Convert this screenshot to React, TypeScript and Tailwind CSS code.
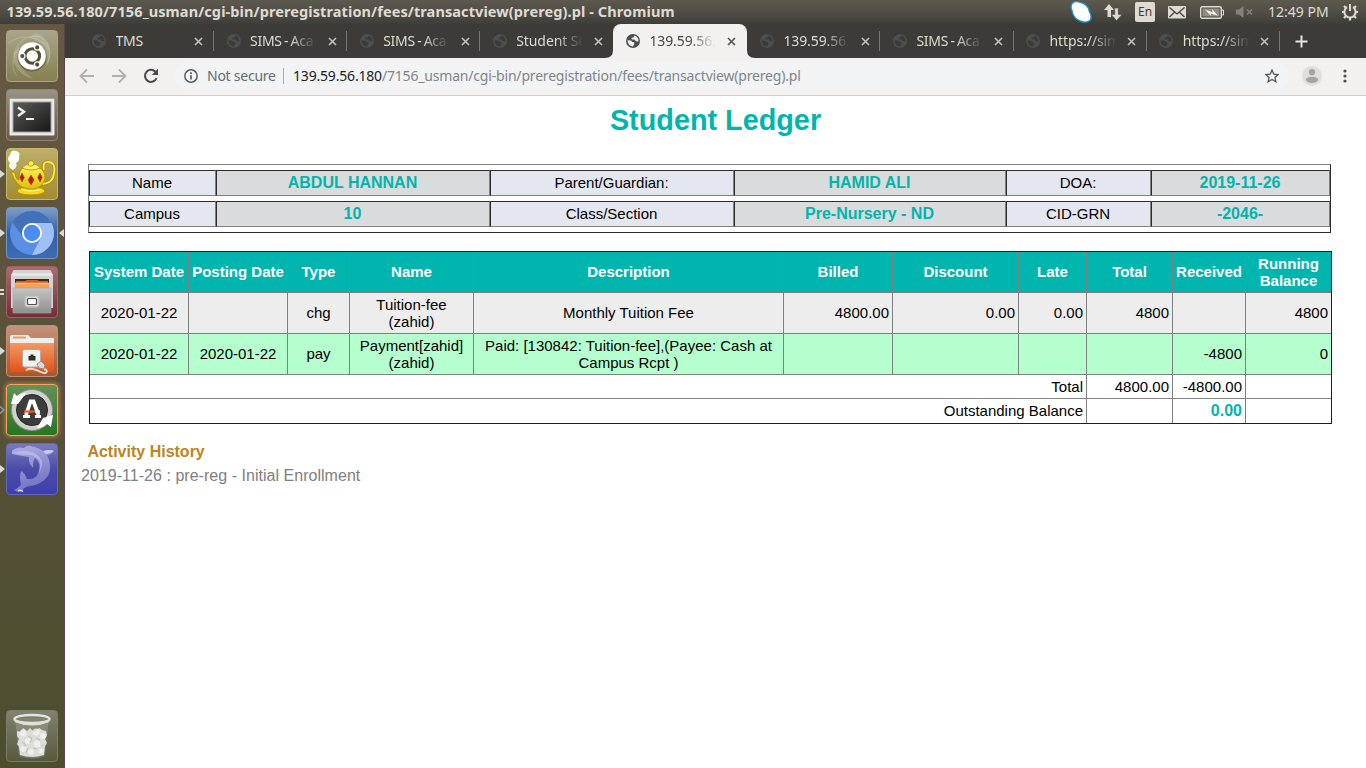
import React from "react";

const UI = "font-['Noto_Sans','Open_Sans',sans-serif]";

/* ---------- top panel ---------- */

function TopPanel() {
  return (
    <header className={`flex h-6 shrink-0 items-center bg-linear-to-b from-[#5c594e] via-[#504e46] to-[#3e3d38] text-[#dfdbd2] ${UI}`}>
      <div className="w-[1063px] whitespace-nowrap pb-0.5 pl-[6.5px] text-[14.5px] leading-[22px] font-bold tracking-[0.1px]">
        139.59.56.180/7156_usman/cgi-bin/preregistration/fees/transactview(prereg).pl - Chromium
      </div>
      <div className="flex flex-1 items-center">
        <svg className="ml-[6px] shrink-0" width="24" height="24" viewBox="0 0 24 24">
          <path d="M3.5 3Q6 .5 12 2.5Q19.5 4.5 20.5 12Q23.5 17 21 20.5Q17 23.5 11 21Q4 18 3 10.5Q.8 6 3.5 3Z" fill="#fff" stroke="#1c8fcb" strokeWidth="1.4" />
        </svg>
        <svg className="ml-[11px] shrink-0" width="18" height="18" viewBox="0 0 18 18" fill="#dfdbd2">
          <path d="M5 1L10 7H7V14H3.5V7H0Z" />
          <path d="M12.5 17.5L7.3 11.5H10.8V5H14.2V11.5H18Z" stroke="#4c4a43" strokeWidth=".5" />
        </svg>
        <div className="ml-[13px] flex h-5 w-5 shrink-0 items-center justify-center rounded-[2px] bg-[#dfdbd2] text-[12px] leading-5 text-[#3c3b37]">En</div>
        <svg className="ml-[13px] shrink-0" width="18" height="13" viewBox="0 0 18 13">
          <rect width="18" height="12.5" rx="1" fill="#dfdbd2" />
          <path d="M1.5 1.5L9 8L16.5 1.5M1.5 11L6.5 6.2M16.5 11L11.5 6.2" fill="none" stroke="#45433d" strokeWidth="1.3" />
        </svg>
        <svg className="ml-[14px] shrink-0" width="24" height="13" viewBox="0 0 24 13">
          <rect x=".7" y=".7" width="20.6" height="11.6" rx="1.5" fill="none" stroke="#dfdbd2" strokeWidth="1.4" />
          <rect x="2.5" y="2.5" width="17" height="8" fill="#8f8c83" />
          <path d="M22 4H23.5V9H22" fill="none" stroke="#dfdbd2" />
          <path d="M5 3.5L12.5 6.2L12 3L18 9.8L10.8 7.4L11 10Z" fill="#f4f1e8" />
        </svg>
        <svg className="ml-3 shrink-0" width="18" height="12" viewBox="0 0 18 12">
          <path d="M0 3.5H3L7.5 0V12L3 8.5H0Z" fill="#858279" />
          <path d="M11 3.5L16 8.5M16 3.5L11 8.5" stroke="#858279" strokeWidth="1.5" />
        </svg>
        <span className="ml-[14px] w-[61px] shrink-0 whitespace-nowrap text-[14px] leading-6 tracking-[0.02px]">12:49 PM</span>
        <svg className="ml-3 shrink-0" width="18" height="18" viewBox="0 0 18 18" fill="none" stroke="#dfdbd2">
          <path d="M6 4.2A5.6 5.6 0 1 0 12 4.2" strokeWidth="2" />
          <path d="M9 1V8" strokeWidth="2" />
          <path d="M1 9H3M15 9H17M9 15V17.5M3 3L4.8 4.8M15 3L13.2 4.8M3 15L4.8 13.2M15 15L13.2 13.2" strokeWidth="2.2" />
        </svg>
      </div>
    </header>
  );
}

/* ---------- launcher ---------- */

function DashIcon() {
  return (
    <g>
      <path d="M8 34C6 18 15 7 29 6C43 7 47 22 41 34M2 13C15 4 34 5 44 20M11 46C3 36 7 20 20 13" fill="none" stroke="#fff" strokeOpacity=".16" strokeWidth="1.2" />
      <path d="M30 3C44 8 48 24 41 36C44 22 38 10 22 8Z" fill="#fff" opacity=".16" />
      <path d="M8 22C6 36 14 46 28 49C18 42 10 36 13 16Z" fill="#fff" opacity=".16" />
      <circle cx="26" cy="27" r="14.6" fill="#4d4a30" opacity=".5" />
      <circle cx="26" cy="26" r="13.8" fill="#fff" />
      <circle cx="26.3" cy="26" r="7.3" fill="none" stroke="#524f35" strokeWidth="3" />
      <g fill="#524f35" stroke="#fff" strokeWidth="1.2">
        <circle cx="16.3" cy="26" r="2.7" /><circle cx="31.2" cy="17.4" r="2.7" /><circle cx="31.2" cy="34.6" r="2.7" />
      </g>
    </g>
  );
}
function TerminalIcon() {
  return (
    <g>
      <rect x="3.5" y="9.5" width="45" height="37" rx="1" fill="#e9e9e7" stroke="#a5a29c" />
      <rect x="6.5" y="12.5" width="39" height="31" fill="#9c9c9a" />
      <rect x="7.5" y="13.5" width="37" height="29" fill="url(#screen)" />
      <path d="M12 18.5L18 22.8L12 27" fill="none" stroke="#f2f2f2" strokeWidth="2.4" />
      <path d="M20 30H28" stroke="#f2f2f2" strokeWidth="2" />
    </g>
  );
}
function TeapotIcon() {
  return (
    <g>
      <path d="M7 22Q1 19 4 15Q0 10 4 7Q5 1 10 3Q15 4 13 9Q14 13 10 15Q12 19 7 22Z" fill="#fff" opacity=".95" />
      <path d="M38 22Q36 13 43 14Q50 15 48 25Q47 36 35 36" fill="none" stroke="#b08a00" strokeWidth="3.2" />
      <path d="M38 22Q36 13 43 14Q50 15 48 25Q47 36 35 36" fill="none" stroke="#ffec50" strokeWidth="1.8" />
      <ellipse cx="25" cy="43" rx="14" ry="4" fill="#f6d91c" stroke="#b58e00" />
      <path d="M5 23L9 25Q10 32 13 32Q12 21 19 19H32Q40 23 39 31Q37 39 28 41H22Q9 39 5 23Z" fill="url(#gold)" stroke="#b58e00" />
      <path d="M16 20Q19 16 25 16Q32 16 34 20Q25 24 16 20Z" fill="#fff06a" stroke="#b58e00" strokeWidth=".8" />
      <circle cx="25" cy="15.5" r="2.8" fill="#ffec50" stroke="#b58e00" strokeWidth=".8" />
      <g fill="#c9101b" stroke="#7c5200" strokeWidth=".5">
        <path d="M16 25L18.3 29.5L16 34L13.8 29.5Z" /><path d="M25 27L28 32L25 37L22 32Z" /><path d="M34 25L36.2 29.5L34 34L31.7 29.5Z" />
      </g>
      <path d="M15 41Q25 45 36 41" fill="none" stroke="#fff7a0" strokeWidth="1" />
    </g>
  );
}
function ChromiumIcon() {
  return (
    <g>
      <circle cx="26" cy="26" r="22" fill="#5a8fe6" />
      <path d="M6.5 15.5A22 22 0 0 1 45.5 16H26A10 10 0 0 0 16.5 29.5Z" fill="#4470b8" />
      <path d="M45.5 16A22 22 0 0 1 26 48L34.8 31Q38.5 22 26 16Z" fill="#9fc0f5" />
      <circle cx="26" cy="26" r="10" fill="#fff" />
      <circle cx="26" cy="26" r="8.2" fill="#4c8bf0" />
    </g>
  );
}
function FilesIcon() {
  return (
    <g>
      <path d="M7 5Q7 4 8 4H44Q45 4 45 5L47 9V42H5V9Z" fill="#d3d3d1" />
      <path d="M6 8.5H46" stroke="#efefee" strokeWidth="2" />
      <path d="M9 13V21H43V13Z" fill="#3c2a21" />
      <path d="M10 15H19L21 14H31L33 15H42V22H10Z" fill="#dc5d1b" />
      <path d="M9 18H43V22H9Z" fill="#f4a057" />
      <path d="M9 17.3H43" stroke="#ffe0b0" />
      <path d="M7 22H45V47H7Z" fill="url(#steel)" stroke="#a6a6a4" strokeWidth=".6" />
      <rect x="19" y="30" width="14" height="11" rx="2" fill="#d8d8d6" stroke="#b9b9b7" />
      <rect x="21.5" y="32.5" width="9" height="6" rx="1" fill="#f7f7f7" stroke="#50504e" strokeWidth="1.2" />
    </g>
  );
}
function NetworkIcon() {
  return (
    <g>
      <path d="M4 12Q4 10 6 10H22L25 13H48V20H4Z" fill="#f1eeea" />
      <path d="M7 12.5H20" stroke="#e9976e" strokeWidth="2" />
      <path d="M4 18H48V44Q48 47 45 47H6Q4 47 4 44Z" fill="url(#orange)" />
      <rect x="16.5" y="24.5" width="18" height="17.5" rx="2" fill="#f2f1ef" stroke="#b5aaa2" />
      <path d="M22.5 35.5V31H24.5V29.5H27.5V31H29.5V35.5Z" fill="#2f302a" />
      <path d="M20 45C26 42 30 45 35 47C41 50 43 45 38 44" fill="none" stroke="#e5e1dc" strokeWidth="1.8" />
      <path d="M31 39L35 36L39 40L38 44L33 43Z" fill="#ddd9d4" stroke="#88817a" strokeWidth=".8" />
    </g>
  );
}
function UpdaterIcon() {
  return (
    <g>
      <circle cx="26" cy="26" r="20.5" fill="#d0d1cf" stroke="#8b8e89" />
      <circle cx="26" cy="26" r="15.5" fill="#3d3d3d" stroke="#222" />
      <path d="M5 20L8 9L11 12Q14 9 20 9L12 20Z" fill="#fff" />
      <path d="M47 31L45 43L41 40Q37 44 31 44L37 34Z" fill="#fff" />
      <path d="M20 31L24.5 17.5H27.5L32.5 31" fill="none" stroke="#fff" strokeWidth="3.8" />
      <path d="M17 32.5H24M29 32.5H35" stroke="#fff" strokeWidth="2.8" />
      <path d="M18 27.5H29" stroke="#f35a1a" strokeWidth="2.2" /><path d="M29 27.5H34" stroke="#fff" strokeWidth="2.2" />
    </g>
  );
}
function DolphinIcon() {
  return (
    <g>
      <path d="M6 8Q11 3 18 5Q21 2 25 3Q33 5 37 8Q44 6 48 8Q45 12 41 12Q47 24 42 33Q35 42 24 43Q17 44 16 49Q12 50 8 47Q14 44 15 41Q13 34 15 28Q19 30 21 36Q30 37 33 29Q35 19 29 15Q27 17 27 25Q22 20 23 14Q15 13 6 11Z" fill="url(#dolphin)" />
      <path d="M7 10Q16 12 24 12Q31 13 34 19Q35 26 31 33Q37 25 36 18Q31 8 20 8Q12 8 7 10Z" fill="#c9cbf0" opacity=".55" />
      <path d="M37 8Q44 6 48 8Q44 11 40 11Z" fill="#c9cbee" />
      <path d="M12 48Q14 46 17 48.5" stroke="#e6e7fa" strokeWidth="1.4" fill="none" />
    </g>
  );
}
function TrashIcon() {
  return (
    <g>
      <path d="M9 8L13 46Q26 51 39 46L43 8Z" fill="#d4d8c8" opacity=".22" />
      <path d="M11 21L15 22L17 18L21 21L24 18L28 22L33 18L36 20L40 21L41 25L39 29L41 33L39 36L38 45Q26 49 14 45L13 37L11 34L13 29L11 26Z" fill="#dcdcda" />
      <g fill="#f4f4f2" opacity=".75">
        <circle cx="17" cy="23" r="3.5" /><circle cx="30" cy="22" r="3.5" /><circle cx="37" cy="26" r="3" /><circle cx="22" cy="31" r="3" /><circle cx="17" cy="39" r="3" /><circle cx="31" cy="34" r="3.5" /><circle cx="35" cy="41" r="2.5" /><circle cx="25" cy="42" r="3" />
      </g>
      <path d="M22 26L26 28L24 33M30 28L34 30M16 32L20 35L18 36M27 38L31 39M22 38L20 43M35 36L37 35" fill="none" stroke="#bcbdb9" strokeWidth="1" />
      <ellipse cx="26" cy="9" rx="17.5" ry="4" fill="#757767" fillOpacity=".5" stroke="#e3e3e0" strokeWidth="2.4" />
      <path d="M9 11Q26 18 43 11" fill="none" stroke="#dededb" strokeWidth="2.2" />
    </g>
  );
}

function Defs() {
  const stops = (a: string, b: string) => (<><stop offset="0" stopColor={a} /><stop offset="1" stopColor={b} /></>);
  return (
    <defs>
      <linearGradient id="screen" x1="0" y1="0" x2="1" y2="1">{stops("#5b5b5a", "#171717")}</linearGradient>
      <linearGradient id="gold" x1="0" y1="0" x2="0" y2="1">{stops("#fff048", "#e2bb10")}</linearGradient>
      <linearGradient id="steel" x1="0" y1="0" x2="0" y2="1">{stops("#c4c4c2", "#8f8f8d")}</linearGradient>
      <linearGradient id="orange" x1="0" y1="0" x2="0" y2="1">{stops("#f39765", "#e25416")}</linearGradient>
      <linearGradient id="dolphin" x1="0" y1="0" x2=".3" y2="1">{stops("#aeb0e0", "#7273c2")}</linearGradient>
    </defs>
  );
}

type Tile = { icon: () => React.JSX.Element; tile: string; mark?: "one" | "two" | "hollow"; focus?: boolean };

const TILES: Tile[] = [
  { icon: DashIcon, tile: "bg-linear-to-b from-[#a9a58a] to-[#858052] border-[#aaa58a]" },
  { icon: TerminalIcon, tile: "bg-linear-to-b from-[#9a9284] to-[#66594a] border-[#8f8575]" },
  { icon: TeapotIcon, tile: "bg-linear-to-b from-[#bdae6a] to-[#a28c2c] border-[#c9b768]", mark: "one" },
  { icon: ChromiumIcon, tile: "bg-linear-to-b from-[#7f9cc9] via-[#315fa9] to-[#3e6cb2] border-[#7595c4]", mark: "one", focus: true },
  { icon: FilesIcon, tile: "bg-linear-to-b from-[#a86b70] to-[#782c3b] border-[#a16169]", mark: "two" },
  { icon: NetworkIcon, tile: "bg-linear-to-b from-[#c3937c] to-[#a9552d] border-[#cb8e6c]", mark: "one" },
  { icon: UpdaterIcon, tile: "bg-linear-to-b from-[#629158] to-[#267521] border-[#f1a45e] shadow-[0_0_4px_1px_#c9783a]", mark: "hollow" },
  { icon: DolphinIcon, tile: "bg-linear-to-b from-[#797ac0] via-[#4b4baa] to-[#3e3fae] border-[#6667b5]", mark: "one" },
];

function TileBox({ item }: { item: Tile }) {
  const Icon = item.icon;
  return (
    <div className="flex h-[52px] items-center">
      <svg width="6" height="12" viewBox="0 0 6 12" className="shrink-0">
        {item.mark === "one" && <path d="M0 2L5 6L0 10Z" fill="#dcdad5" />}
        {item.mark === "two" && <path d="M0 4H4M0 8H4" stroke="#dcdad5" strokeWidth="2.2" />}
        {item.mark === "hollow" && <path d="M0 2.5L4 6L0 9.5" fill="none" stroke="#69b6e0" strokeWidth="1.2" />}
      </svg>
      <div className={`h-[52px] w-[52px] shrink-0 rounded-[4px] border ${item.tile}`}>
        <svg className="-m-px block" width="52" height="52" viewBox="0 0 52 52"><Icon /></svg>
      </div>
      {item.focus && (
        <svg width="7" height="12" viewBox="0 0 7 12" className="shrink-0"><path d="M6 2L1 6L6 10Z" fill="#dcdad5" /></svg>
      )}
    </div>
  );
}

function Launcher() {
  return (
    <nav className="flex w-[65px] shrink-0 flex-col justify-between border-r border-[#5c4549] bg-linear-to-b from-[#665943] via-[#57513a] to-[#4c4e2e] pt-[6px] pb-[6px]">
      <svg width="0" height="0" className="absolute"><Defs /></svg>
      <div className="flex flex-col gap-[7px]">
        {TILES.map((t, i) => <TileBox key={i} item={t} />)}
      </div>
      <TileBox item={{ icon: TrashIcon, tile: "bg-linear-to-b from-[#81826f] to-[#58593e] border-[#7b7c66]" }} />
    </nav>
  );
}

/* ---------- browser chrome ---------- */

function Globe({ active }: { active: boolean }) {
  return (
    <svg width="14" height="14" viewBox="0 0 14 14" className="shrink-0">
      <circle cx="7" cy="7" r="7" fill={active ? "#4b4c4e" : "#4d4e50"} />
      <path d="M1.4 6.2L5 6.5L6.3 8L8.4 8.2L8.2 10.2L6.8 12.4Q2.2 12 1.4 6.2ZM8.6 1.6L7.7 3.2L5.3 4L6 5.4L8.4 5.6L10 7.2L12.5 7.4Q12.7 3.2 8.6 1.6Z" fill={active ? "#f2f1f0" : "#3c3b37"} />
    </svg>
  );
}

const TABS = ["TMS", "SIMS - Aca", "SIMS - Aca", "Student Se", "139.59.56.", "139.59.56.", "SIMS - Aca", "https://sim", "https://sim"];

function TabStrip() {
  return (
    <div className={`flex h-[34px] shrink-0 bg-[#3c3b37] pl-4 ${UI}`}>
      {TABS.map((t, i) => {
        const active = i === 4;
        const divider = i !== 3 && !active;
        return (
          <div key={i} className={`relative flex shrink-0 items-center ${active ? "w-[134px] rounded-t-[8px] bg-[#f2f1f0] text-[#45474a]" : "w-[133.1px] text-[#dfdbd2]"}`}>
            <div className={i === 0 ? "ml-[11px] flex" : "ml-[12.5px] flex"}><Globe active={active} /></div>
            <div className={`ml-[9.5px] overflow-hidden whitespace-nowrap text-[14px] leading-5 ${i === 0 ? "w-[67px] tracking-[-0.2px]" : "w-[67px] mask-r-from-60% mask-r-to-100%"} ${t.startsWith("SIMS") ? "tracking-[-0.3px] [word-spacing:-1px]" : "tracking-[-0.1px]"}`}>{t}</div>
            <svg className={i === 0 ? "ml-[11px]" : "ml-[10.5px]"} width="9" height="9" viewBox="0 0 9 9">
              <path d="M1 1L8 8M8 1L1 8" stroke={active ? "#505255" : "#c3c0b8"} strokeWidth="1.6" />
            </svg>
            {divider && <div className="absolute top-[7px] right-0 h-5 w-px bg-[#77766f]" />}
            {active && (
              <>
                <svg className="absolute bottom-0 -left-2" width="8" height="8" viewBox="0 0 8 8"><path d="M8 0V8H0Q8 8 8 0Z" fill="#f2f1f0" /></svg>
                <svg className="absolute -right-2 bottom-0" width="8" height="8" viewBox="0 0 8 8"><path d="M0 0V8H8Q0 8 0 0Z" fill="#f2f1f0" /></svg>
              </>
            )}
          </div>
        );
      })}
      <svg className="mt-[11px] ml-[15px]" width="13" height="13" viewBox="0 0 13 13"><path d="M6.5 .5V12.5M.5 6.5H12.5" stroke="#e8e4db" strokeWidth="2" /></svg>
    </div>
  );
}

function Toolbar() {
  return (
    <div className={`flex h-[38px] shrink-0 items-center border-b border-[#cfcecd] bg-[#f2f1f0] pb-px ${UI}`}>
      <svg className="ml-[14px]" width="16" height="16" viewBox="0 0 16 16" fill="none" stroke="#b0b0b0" strokeWidth="1.8"><path d="M15 8H2M8 1.5L1.5 8L8 14.5" /></svg>
      <svg className="ml-4" width="16" height="16" viewBox="0 0 16 16" fill="none" stroke="#b0b0b0" strokeWidth="1.8"><path d="M1 8H14M8 1.5L14.5 8L8 14.5" /></svg>
      <svg className="ml-4" width="16" height="16" viewBox="0 0 16 16"><path d="M13.6 10A6 6 0 1 1 12.4 3.8" fill="none" stroke="#46484b" strokeWidth="2" /><path d="M15 .8V7H8.8Z" fill="#46484b" /></svg>
      <div className="ml-[15px] flex h-7 w-[1116px] shrink-0 items-center rounded-full bg-[#f1f3f5] pl-[10px] text-[14px] leading-5">
        <svg width="14" height="14" viewBox="0 0 14 14"><circle cx="7" cy="7" r="6.2" fill="none" stroke="#5a5c60" strokeWidth="1.5" /><path d="M7 6.2V10.5M7 3.2V4.9" stroke="#5a5c60" strokeWidth="1.7" /></svg>
        <span className="ml-[9px] w-[69px] shrink-0 whitespace-nowrap text-[#696c70] tracking-[-0.25px]">Not secure</span>
        <div className="ml-[7px] h-4 w-px bg-[#a9abad]" />
        <span className="ml-[9px] whitespace-nowrap text-[#80858a] tracking-[-0.185px]"><span className="text-[#202124]">139.59.56.180</span>/7156_usman/cgi-bin/preregistration/fees/transactview(prereg).pl</span>
        <svg className="mr-[11px] ml-auto" width="14" height="14" viewBox="0 0 14 14"><path d="M7 1L8.8 5.1L13.2 5.5L9.9 8.4L10.9 12.8L7 10.5L3.1 12.8L4.1 8.4L.8 5.5L5.2 5.1Z" fill="none" stroke="#55585c" strokeWidth="1.3" /></svg>
      </div>
      <svg className="ml-3 shrink-0" width="20" height="20" viewBox="0 0 20 20"><circle cx="10" cy="10" r="10" fill="#dedede" /><circle cx="10" cy="6.2" r="3.1" fill="#a4a4a4" /><ellipse cx="10" cy="13.8" rx="6" ry="3.1" fill="#a4a4a4" /></svg>
      <svg className="ml-[21px] shrink-0" width="4" height="14" viewBox="0 0 4 14" fill="#4b4d50"><circle cx="2" cy="2" r="1.6" /><circle cx="2" cy="7" r="1.6" /><circle cx="2" cy="12" r="1.6" /></svg>
    </div>
  );
}

/* ---------- page ---------- */

const INFO: [string, string][][] = [
  [["Name", "ABDUL HANNAN"], ["Parent/Guardian:", "HAMID ALI"], ["DOA:", "2019-11-26"]],
  [["Campus", "10"], ["Class/Section", "Pre-Nursery - ND"], ["CID-GRN", "-2046-"]],
];

function InfoTable() {
  const edge = "flex items-center justify-center border border-t-[#2c2c2c] border-l-[#2c2c2c] border-r-[#808080] border-b-[#808080] pr-px";
  return (
    <div className="ml-[23px] flex h-[69px] w-[1243px] flex-col gap-[5px] border border-t-[#808080] border-r-[#2c2c2c] border-b-[#2c2c2c] border-l-[#808080] pt-[5px]">
      {INFO.map((row, i) => (
        <div key={i} className="grid h-[26px] grid-cols-[127px_274px_244px_272px_145px_179px]">
          {row.map(([k, v]) => (
            <React.Fragment key={k}>
              <div className={`${edge} bg-[#e4e7ef] pb-0.5 text-[15px] leading-none`}>{k}</div>
              <div className={`${edge} bg-[#dadbdc] text-[16px] leading-none font-bold text-[#00b5ad]`}>{v}</div>
            </React.Fragment>
          ))}
        </div>
      ))}
    </div>
  );
}

const HEAD = ["System Date", "Posting Date", "Type", "Name", "Description", "Billed", "Discount", "Late", "Total", "Received", "Running\nBalance"];
const ROWS = [
  ["2020-01-22", "", "chg", "Tuition-fee\n(zahid)", "Monthly Tuition Fee", "4800.00", "0.00", "0.00", "4800", "", "4800"],
  ["2020-01-22", "2020-01-22", "pay", "Payment[zahid]\n(zahid)", "Paid: [130842: Tuition-fee],(Payee: Cash at\nCampus Rcpt )", "", "", "", "", "-4800", "0"],
];

function Ledger() {
  const cell = "flex items-center border-b border-[#808080] whitespace-pre-line";
  const side = (i: number) => (i < 10 ? "border-r" : "");
  const lift = (v: string) => (v.includes("\n") ? "" : "pb-px");
  return (
    <div className="mt-[18px] ml-6 grid h-[173px] w-[1243px] grid-cols-[99px_99px_62px_124px_310px_109px_126px_68px_86px_73px_85px] grid-rows-[41px_41px_41px_24px_24px] border border-[#202020] text-[15px] leading-[17px]">
      {HEAD.map((h, i) => (
        <div key={h} className={`${cell} ${side(i)} ${lift(h)} justify-center bg-[#00b5ad] text-center font-bold text-white`}>{h}</div>
      ))}
      {ROWS.map((r, n) => r.map((v, i) => (
        <div key={`${n}-${i}`} className={`${cell} ${side(i)} ${lift(v)} ${n === 0 ? "bg-[#ededed]" : "bg-[#b5ffcf]"} ${i < 5 ? "justify-center text-center" : "justify-end pr-[3px]"}`}>{v}</div>
      )))}
      <div className={`${cell} col-span-8 justify-end border-r pr-[3px]`}>Total</div>
      <div className={`${cell} justify-end border-r pr-[3px]`}>4800.00</div>
      <div className={`${cell} justify-end border-r pr-[3px]`}>-4800.00</div>
      <div className={cell} />
      <div className="col-span-8 flex items-center justify-end border-r border-[#808080] pr-[3px] pb-px">Outstanding Balance</div>
      <div className="border-r border-[#808080]" />
      <div className="flex items-center justify-end border-r border-[#808080] pr-[3px] pb-px text-[16px] font-bold text-[#00b5ad]">0.00</div>
      <div />
    </div>
  );
}

function Page() {
  return (
    <main className="flex-1 bg-white font-['Liberation_Sans',Arial,sans-serif] text-black">
      <h1 className="mt-[7px] mb-[27px] h-[34px] text-center text-[28.8px] leading-[34px] font-bold text-[#00b5ad]">Student Ledger</h1>
      <InfoTable />
      <Ledger />
      <h2 className="mt-[18px] ml-[22.4px] text-[16px] leading-5 font-bold text-[#c0841a]">Activity History</h2>
      <p className="mt-1 ml-4 text-[16px] leading-5 tracking-[0.03px] text-[#808080]">2019-11-26 : pre-reg - Initial Enrollment</p>
    </main>
  );
}

export default function App() {
  return (
    <div className="flex h-[768px] w-[1366px] flex-col overflow-hidden">
      <TopPanel />
      <div className="flex min-h-0 flex-1">
        <Launcher />
        <div className="flex w-[1301px] flex-col">
          <TabStrip />
          <Toolbar />
          <Page />
        </div>
      </div>
    </div>
  );
}
